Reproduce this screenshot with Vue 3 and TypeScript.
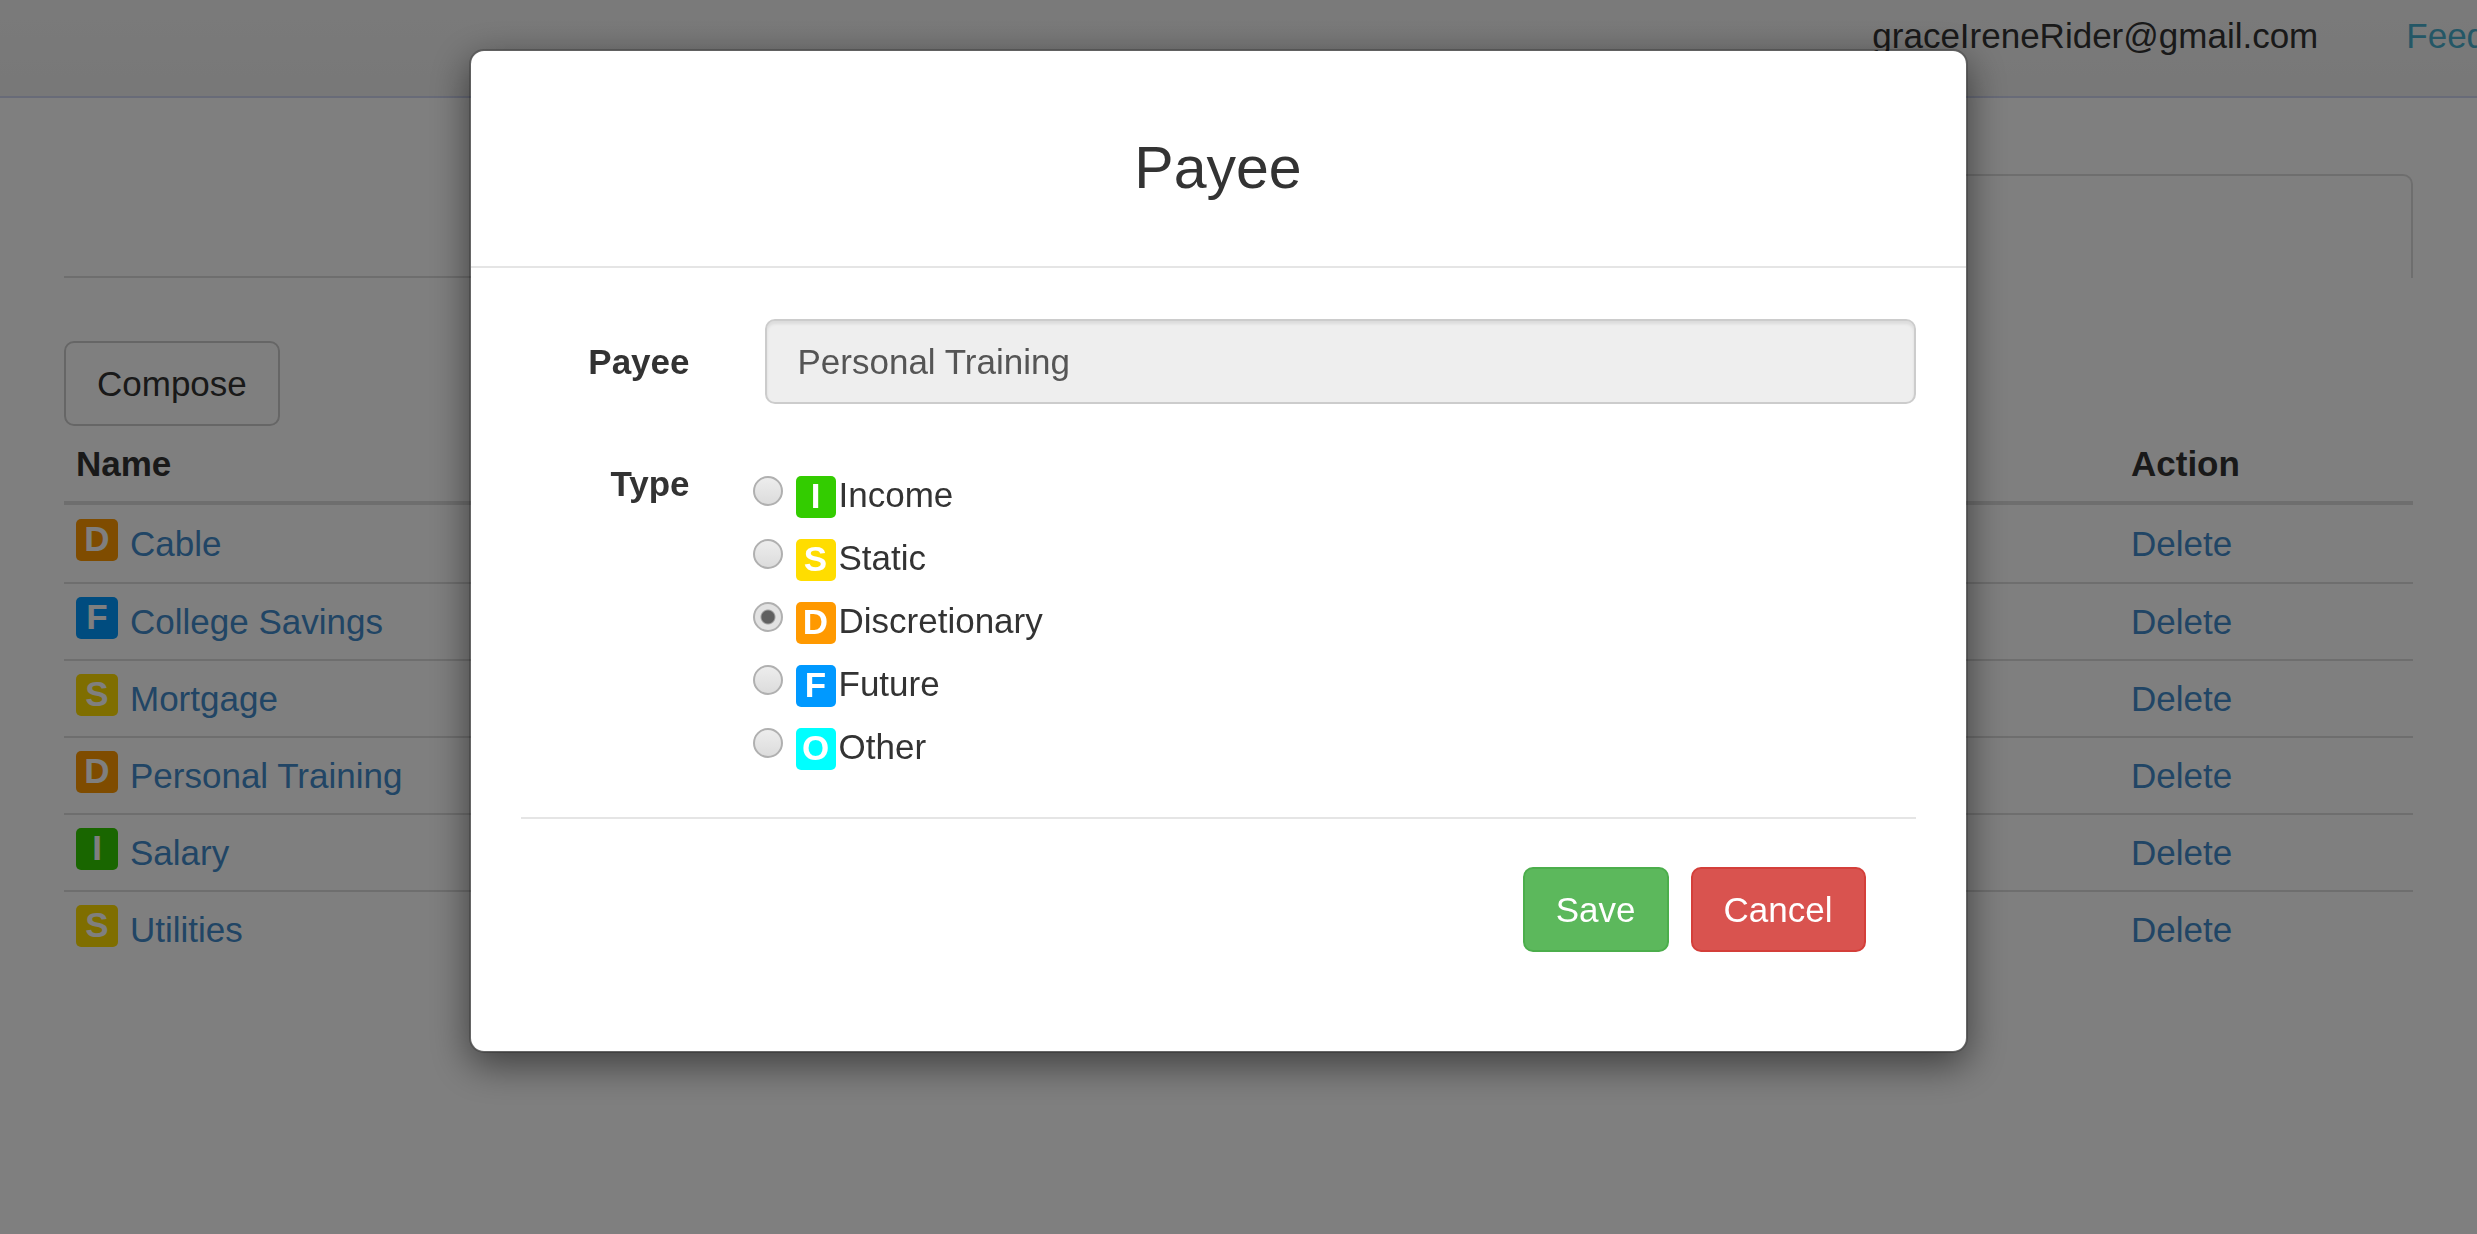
<script setup lang="ts">
import { ref } from 'vue'

interface Kind {
  code: string
  label: string
}

interface Payee {
  name: string
  code: string
}

const kinds: Kind[] = [
  { code: 'I', label: 'Income' },
  { code: 'S', label: 'Static' },
  { code: 'D', label: 'Discretionary' },
  { code: 'F', label: 'Future' },
  { code: 'O', label: 'Other' },
]

const payees: Payee[] = [
  { name: 'Cable', code: 'D' },
  { name: 'College Savings', code: 'F' },
  { name: 'Mortgage', code: 'S' },
  { name: 'Personal Training', code: 'D' },
  { name: 'Salary', code: 'I' },
  { name: 'Utilities', code: 'S' },
]

const selected = ref('D')
const payeeName = ref('Personal Training')
</script>

<template>
  <div class="page">
    <header class="topbar">
      <nav class="account">
        <span>graceIreneRider@gmail.com</span>
        <a class="feedback" href="#feedback">Feedback</a>
      </nav>
    </header>

    <main class="content">
      <div class="tabs">
        <div class="tab"></div>
        <div class="tab active"></div>
      </div>

      <button type="button" class="btn btn-default">Compose</button>

      <table class="payees">
        <thead>
          <tr>
            <th scope="col">Name</th>
            <th scope="col" class="action">Action</th>
          </tr>
        </thead>
        <tbody>
          <tr v-for="payee in payees" :key="payee.name">
            <td>
              <div class="name">
                <span class="badge" :class="'kind-' + payee.code">{{ payee.code }}</span>
                <a href="#payee">{{ payee.name }}</a>
              </div>
            </td>
            <td><a href="#delete">Delete</a></td>
          </tr>
        </tbody>
      </table>
    </main>
  </div>

  <div class="overlay">
    <form class="modal" role="dialog" aria-labelledby="modal-title" @submit.prevent>
      <div class="modal-header">
        <h4 id="modal-title">Payee</h4>
      </div>
      <div class="modal-body">
        <div class="field">
          <label class="caption" for="payee-name">Payee</label>
          <input id="payee-name" v-model="payeeName" class="text-input" type="text" disabled />
        </div>
        <div class="field field-type" role="radiogroup" aria-labelledby="type-caption">
          <span id="type-caption" class="caption">Type</span>
          <div class="options">
            <label v-for="kind in kinds" :key="kind.code" class="option">
              <input v-model="selected" type="radio" name="kind" :value="kind.code" />
              <span class="badge" :class="'kind-' + kind.code">{{ kind.code }}</span>
              <span>{{ kind.label }}</span>
            </label>
          </div>
        </div>
        <div class="actions">
          <button type="submit" class="btn btn-save">Save</button>
          <button type="button" class="btn btn-cancel">Cancel</button>
        </div>
      </div>
    </form>
  </div>
</template>

<style>
html,
body {
  margin: 0;
  background: #fff;
}
</style>

<style scoped>
.page,
.overlay {
  font-family: "Liberation Sans", Arial, sans-serif;
  font-size: 35px;
  line-height: 50px;
  color: #333;
}

.page *,
.overlay * {
  box-sizing: border-box;
}

a {
  color: #428bca;
  text-decoration: none;
}

.topbar {
  padding: 11px 0 35px;
  overflow: hidden;
  background: linear-gradient(#f5f5f5, #f0f0f0);
  border-bottom: 2px solid #d0d6f0;
}

.account {
  display: flex;
  justify-content: flex-end;
  gap: 88px;
  margin-right: -83px;
}

.account .feedback {
  color: #49afcd;
}

.content {
  padding: 76px 64px 0;
}

.tabs {
  display: flex;
  margin-bottom: 63px;
}

.tab {
  flex: 1;
  height: 104px;
  border-bottom: 2px solid #ddd;
}

.tab.active {
  border: 2px solid #ddd;
  border-bottom: 0;
  border-radius: 10px 10px 0 0;
}

.btn {
  display: block;
  height: 85px;
  padding: 0 31px;
  border: 2px solid #ccc;
  border-radius: 10px;
  background: #fff;
  color: #333;
  font: inherit;
}

.payees {
  width: 100%;
  border-collapse: separate;
  border-spacing: 0;
  table-layout: fixed;
}

.payees th,
.payees td {
  height: 77px;
  padding: 0 12px;
  text-align: left;
  vertical-align: middle;
}

.payees th {
  height: 79px;
  border-bottom: 4px solid #ddd;
}

.payees tr + tr td {
  border-top: 2px solid #ddd;
}

.payees .action {
  width: 294px;
}

.name {
  display: flex;
  gap: 12px;
}

.badge {
  width: 42px;
  height: 42px;
  border-radius: 5px;
  color: #fff;
  font-size: 35px;
  font-weight: bold;
  line-height: 40px;
  text-align: center;
}

.kind-I { background: #3c0; }
.kind-S { background: #fd0; }
.kind-D { background: #f90; }
.kind-F { background: #09f; }
.kind-O { background: #0ff; }

.overlay {
  position: fixed;
  inset: 0;
  display: flex;
  align-items: flex-start;
  justify-content: center;
  padding: 49px 41px 0 0;
  background: rgba(0, 0, 0, 0.5);
}

.modal {
  width: 100%;
  max-width: 1499px;
  border: 2px solid rgba(0, 0, 0, 0.2);
  border-radius: 15px;
  background: #fff;
  background-clip: padding-box;
  box-shadow: 0 12px 38px rgba(0, 0, 0, 0.5);
}

.modal-header {
  padding: 84px 50px 65px;
  border-bottom: 2px solid #e5e5e5;
}

.modal-header h4 {
  margin: 0;
  font-size: 59px;
  font-weight: normal;
  line-height: 66px;
  text-align: center;
}

.modal-body {
  padding: 51px 50px 99px;
}

.field {
  display: grid;
  grid-template-columns: 169px 1fr;
  column-gap: 75px;
}

.caption {
  font-weight: bold;
  text-align: right;
}

.field > label {
  align-self: center;
}

.text-input {
  width: 100%;
  height: 85px;
  padding: 0 31px;
  border: 2px solid #ccc;
  border-radius: 10px;
  background: #eee;
  box-shadow: inset 0 3px 3px rgba(0, 0, 0, 0.08);
  color: #555;
  font: inherit;
}

.field-type {
  column-gap: 63px;
  padding: 55px 0 32px;
}

.options {
  padding-top: 11px;
}

.option {
  display: flex;
  height: 63px;
}

.option input {
  appearance: none;
  width: 30px;
  height: 30px;
  margin: 6px 13px 0 0;
  border: 2px solid #b0b0b0;
  border-radius: 50%;
  background: linear-gradient(#ededed, #dcdcdc);
}

.option input:checked {
  background: radial-gradient(circle, #606060 6px, #e2e2e2 8px);
}

.option .badge {
  width: 40px;
  margin: 6px 3px 0 0;
}

.actions {
  display: flex;
  justify-content: flex-end;
  gap: 22px;
  padding: 48px 50px 0;
  border-top: 2px solid #e5e5e5;
}

.btn-save {
  border-color: #4cae4c;
  background: #5cb85c;
  color: #fff;
}

.btn-cancel {
  border-color: #d43f3a;
  background: #d9534f;
  color: #fff;
}
</style>
